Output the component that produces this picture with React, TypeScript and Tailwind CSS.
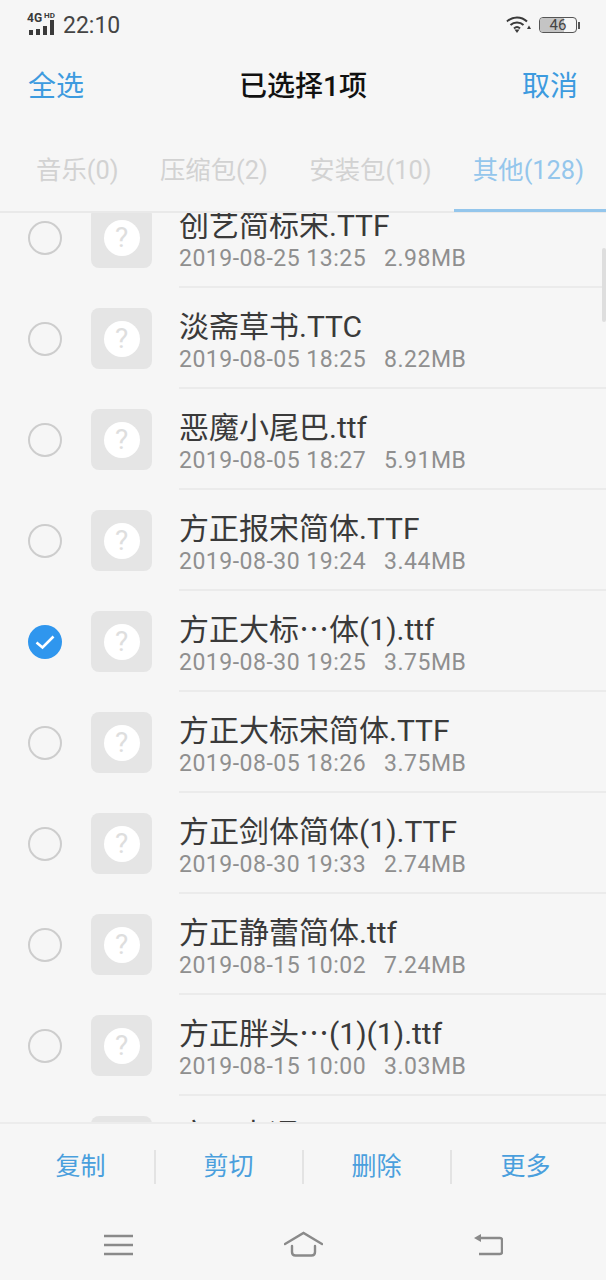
const FONT = "font-['Roboto','Noto_Sans_CJK_SC',sans-serif]";

const rows = [
  { name: "创艺简标宋.TTF", date: "2019-08-25 13:25", size: "2.98MB" },
  { name: "淡斋草书.TTC", date: "2019-08-05 18:25", size: "8.22MB" },
  { name: "恶魔小尾巴.ttf", date: "2019-08-05 18:27", size: "5.91MB" },
  { name: "方正报宋简体.TTF", date: "2019-08-30 19:24", size: "3.44MB" },
  { name: "方正大标⋯体(1).ttf", date: "2019-08-30 19:25", size: "3.75MB", checked: true },
  { name: "方正大标宋简体.TTF", date: "2019-08-05 18:26", size: "3.75MB" },
  { name: "方正剑体简体(1).TTF", date: "2019-08-30 19:33", size: "2.74MB" },
  { name: "方正静蕾简体.ttf", date: "2019-08-15 10:02", size: "7.24MB" },
  { name: "方正胖头⋯(1)(1).ttf", date: "2019-08-15 10:00", size: "3.03MB" },
  { name: "方正卡通.ttf" },
];

function Row({ name, date, size, checked }: { name: string; date?: string; size?: string; checked?: boolean }) {
  return (
    <div className="flex h-[101px] shrink-0 items-center pl-[28px]">
      {checked ? (
        <div className="flex h-[34px] w-[34px] shrink-0 items-center justify-center rounded-full bg-[#2f96ee]">
          <svg width="20" height="16" viewBox="0 0 20 16" fill="none">
            <path d="M1.5 8.5l6 5L18.5 2.5" stroke="#fff" strokeWidth="2.6" />
          </svg>
        </div>
      ) : (
        <div className="h-[34px] w-[34px] shrink-0 rounded-full border-2 border-[#cdcdcd]" />
      )}
      <div className="ml-[29px] flex h-[61px] w-[61px] shrink-0 items-center justify-center rounded-[8px] bg-[#e5e5e5]">
        <div className="flex h-[36px] w-[36px] items-center justify-center rounded-full bg-white text-[28px] leading-none text-[#dedede]">?</div>
      </div>
      <div className="ml-[27px] flex h-full min-w-0 flex-1 flex-col border-b-2 border-[#ebebeb] pt-[21px]">
        <div className="text-[30px] leading-[35px] whitespace-nowrap text-[#3a3a3a]">{name}</div>
        {date && (
          <div className="mt-[2px] flex text-[23px] leading-[27px] tracking-[0.5px] whitespace-nowrap text-[#8f8f8f]">
            <span>{date}</span>
            <span className="ml-[18px]">{size}</span>
          </div>
        )}
      </div>
    </div>
  );
}

function Tab({ label, active }: { label: string; active?: boolean }) {
  return <span className={active ? "text-[#94c6ec]" : "text-[#d2d2d2]"}>{label}</span>;
}

export default function App() {
  return (
    <div className={`${FONT} flex h-[1280px] w-[606px] flex-col overflow-hidden bg-[#f6f6f6]`}>
      {/* status bar */}
      <div className="flex h-[50px] shrink-0 items-center justify-between pr-[26px] pl-[27px]">
        <div className="flex items-center">
          <div className="relative h-[24px] w-[29px]">
            <span className="absolute top-[-1px] left-0 text-[12px] leading-[12px] font-bold text-[#3a3a3a]">4G</span>
            <span className="absolute top-[-1px] left-[17px] text-[8px] leading-[8px] font-bold text-[#3a3a3a]">HD</span>
            <svg className="absolute top-[6px] left-[1px]" width="27" height="16" viewBox="0 0 27 16" fill="#3a3a3a">
              <rect x="1" y="11" width="4" height="5" />
              <rect x="8" y="10" width="4" height="6" />
              <rect x="15" y="7" width="4" height="9" />
              <rect x="22" y="1" width="4" height="15" />
            </svg>
          </div>
          <span className="ml-[7px] text-[23px] leading-none text-[#444]">22:10</span>
        </div>
        <div className="flex items-center">
          <svg width="26" height="20" viewBox="0 0 26 20" fill="none" stroke="#3a3a3a" strokeWidth="2">
            <path d="M1 6.5C6.5 1 15.5 1 21 6.5" />
            <path d="M4.5 10C8 6.5 14 6.5 17.5 10" />
            <path d="M8 13.5C10 11.5 12 11.5 14 13.5" />
            <path d="M8.5 14.5L11 18l2.5-3.5z" fill="#3a3a3a" stroke="none" />
            <path d="M21 14l4 0-2-3.5z" fill="#3a3a3a" stroke="none" />
          </svg>
          <div className="relative ml-[7px] flex h-[16px] w-[38px] items-center overflow-hidden rounded-[4px] border border-[#555]">
            <div className="h-full w-[24px] bg-[#c4c4c4]" />
            <span className="absolute inset-0 text-center text-[15px] leading-[14px] text-[#444]">46</span>
          </div>
          <div className="ml-[1px] h-[7px] w-[2px] bg-[#555]" />
        </div>
      </div>

      {/* title bar */}
      <div className="flex h-[73px] shrink-0 items-center justify-between px-[28px] pt-[1px] text-[28px]">
        <span className="text-[#3d9bdf]">全选</span>
        <span className="font-medium text-[#111]">已选择1项</span>
        <span className="text-[#3d9bdf]">取消</span>
      </div>

      {/* tabs */}
      <div className="relative flex h-[90px] shrink-0 items-center border-b-2 border-[#e9e9e9] pt-[6px] text-[25.4px]">
        <div className="flex w-full justify-between pr-[22px] pl-[36px]">
          <Tab label="音乐(0)" />
          <Tab label="压缩包(2)" />
          <Tab label="安装包(10)" />
          <Tab label="其他(128)" active />
        </div>
        <div className="absolute right-0 bottom-[-1px] h-[3px] w-[152px] bg-[#94c6ec]" />
      </div>

      {/* list */}
      <div className="relative min-h-0 flex-1 overflow-hidden">
        <div className="mt-[-26px] flex flex-col">
          {rows.map((r) => (
            <Row key={r.name} {...r} />
          ))}
        </div>
        <div className="absolute top-[35px] right-0 h-[74px] w-[4px] rounded-full bg-[#dedede]" />
      </div>

      {/* action bar */}
      <div className="flex h-[158px] shrink-0 flex-col border-t-2 border-[#ececec] bg-[#f6f6f6]">
        <div className="flex h-[85px] shrink-0 items-center text-[25px] text-[#4a9fdd]">
          {["复制", "剪切", "删除", "更多"].map((t) => (
            <div key={t} className="flex h-[34px] w-[148px] items-center justify-center first:ml-[7.5px] not-last:border-r-2 not-last:border-[#e3e3e3]">
              {t}
            </div>
          ))}
        </div>
        <div className="flex flex-1 items-start justify-center gap-[151px] pt-[22px]">
          <svg className="mt-[3px]" width="29" height="22" viewBox="0 0 29 22" fill="none" stroke="#8a8a8a" strokeWidth="2.4">
            <path d="M0 2h29M0 11h29M0 20h29" />
          </svg>
          <svg width="39" height="26" viewBox="0 0 39 26" fill="none" stroke="#8a8a8a" strokeWidth="2.4" strokeLinecap="round">
            <path d="M1 13L19.5 2 38 13" />
            <path d="M8 15v6q0 3.5 3.5 3.5h16q3.5 0 3.5-3.5v-6" />
          </svg>
          <svg className="mt-[1px]" width="29" height="24" viewBox="0 0 29 24" fill="none" stroke="#8a8a8a" strokeWidth="2.4">
            <path d="M5 6h21q2 0 2 2v12q0 2-2 2H5" />
            <path d="M0 6l7-4v8z" fill="#8a8a8a" stroke="none" />
          </svg>
        </div>
      </div>
    </div>
  );
}
